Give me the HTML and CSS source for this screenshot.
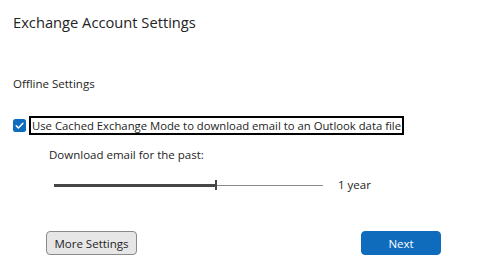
FILE: index.html
```html
<!DOCTYPE html>
<html lang="en">
<head>
  <meta charset="UTF-8"/>
  <title>Exchange Account Settings</title>
  <link rel="stylesheet" href="styles.css">
</head>
<body>
  <div class="dialog">
    <h1 class="title">Exchange Account Settings</h1>

    <div class="section-title">Offline Settings</div>

    <label class="check-row">
      <span class="checkbox">
        <svg viewBox="0 0 13 13" width="13" height="13">
          <rect x="0" y="0" width="13" height="13" rx="2.5" fill="#0f6cbd"/>
          <path d="M3.2 6.8 L5.4 9 L9.9 4.3" fill="none" stroke="#fff" stroke-width="1.5" stroke-linecap="round" stroke-linejoin="round"/>
        </svg>
      </span>
      <span class="check-label">Use Cached Exchange Mode to download email to an Outlook data file</span>
    </label>

    <div class="sub">
      <div class="sub-label">Download email for the past:</div>
      <div class="slider-row">
        <div class="slider">
          <div class="slider-fill"></div>
          <div class="slider-thumb"></div>
          <div class="slider-rest"></div>
        </div>
        <span class="slider-value">1 year</span>
      </div>
    </div>

    <div class="actions">
      <button class="btn">More Settings</button>
      <button class="btn btn-primary">Next</button>
    </div>
  </div>
</body>
</html>
```
FILE: styles.css
```css
:root {
  --text: #242424;
  --primary: #0f6cbd;
  --btn-bg: #e6e6e6;
  --btn-border: #8a8a8a;
}

* {
  margin: 0;
  padding: 0;
  box-sizing: border-box;
}

body {
  font-family: 'Open Sans', 'Noto Sans', sans-serif;
  background: #fff;
  color: var(--text);
  width: 489px;
  height: 279px;
  overflow: hidden;
}

.dialog {
  padding: 12px 0 0 13px;
}

.title {
  font-size: 14.7px;
  font-weight: 400;
  line-height: 20px;
}

.section-title {
  margin-top: 44px;
  font-size: 11.5px;
  line-height: 16px;
}

/* checkbox row */
.check-row {
  display: flex;
  align-items: center;
  margin-top: 24px;
}
.checkbox {
  display: flex;
  width: 13px;
  height: 13px;
}
.check-label {
  margin-left: 3px;
  border: 2px solid #000;
  padding: 0 1px;
  font-size: 11.3px;
  line-height: 15px;
  white-space: nowrap;
}

/* slider */
.sub {
  padding-left: 36px;
  margin-top: 12px;
}
.sub-label {
  font-size: 11.5px;
  line-height: 16px;
}
.slider-row {
  display: flex;
  align-items: center;
  margin-top: 14px;
  padding-left: 5px;
}
.slider {
  display: flex;
  align-items: center;
  width: 269px;
  height: 10px;
}
.slider-fill {
  width: 161px;
  height: 3px;
  background: #464646;
}
.slider-thumb {
  width: 2px;
  height: 10px;
  background: #464646;
}
.slider-rest {
  flex: 1;
  height: 1px;
  background: #8a8a8a;
}
.slider-value {
  margin-left: 15px;
  font-size: 11.5px;
  line-height: 16px;
}

/* buttons */
.actions {
  display: flex;
  justify-content: space-between;
  width: 395px;
  margin: 38px 0 0 33px;
}
.btn {
  font-family: inherit;
  font-size: 11.5px;
  color: var(--text);
  height: 24px;
  width: 91px;
  background: var(--btn-bg);
  border: 1px solid var(--btn-border);
  border-radius: 4px;
}
.btn-primary {
  width: 80px;
  background: var(--primary);
  border-color: var(--primary);
  color: #fff;
}
```
